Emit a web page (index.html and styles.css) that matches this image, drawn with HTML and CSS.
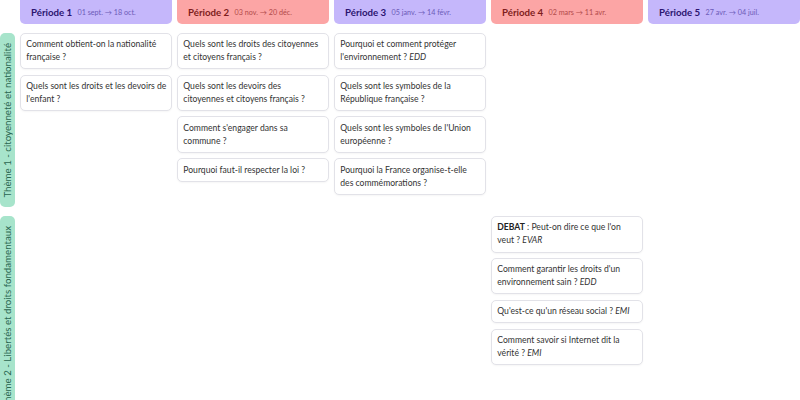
FILE: index.html
```html
<!DOCTYPE html>
<html lang="fr">
<head>
<meta charset="utf-8">
<link rel="stylesheet" href="styles.css">
</head>
<body>
<div class="board">
  <div class="corner"></div>
  <div class="period violet"><span class="p-name">Période 1</span><span class="p-date">01 sept. → 18 oct.</span></div>
  <div class="period red"><span class="p-name">Période 2</span><span class="p-date">03 nov. → 20 déc.</span></div>
  <div class="period violet"><span class="p-name">Période 3</span><span class="p-date">05 janv. → 14 févr.</span></div>
  <div class="period red"><span class="p-name">Période 4</span><span class="p-date">02 mars → 11 avr.</span></div>
  <div class="period violet"><span class="p-name">Période 5</span><span class="p-date">27 avr. → 04 juil.</span></div>

  <div class="theme"><span>Thème 1 - citoyenneté et nationalité</span></div>
  <div class="cell">
    <div class="card">Comment obtient-on la nationalité<br>française ?</div>
    <div class="card">Quels sont les droits et les devoirs de<br>l'enfant ?</div>
  </div>
  <div class="cell">
    <div class="card">Quels sont les droits des citoyennes<br>et citoyens français ?</div>
    <div class="card">Quels sont les devoirs des<br>citoyennes et citoyens français ?</div>
    <div class="card">Comment s'engager dans sa<br>commune ?</div>
    <div class="card">Pourquoi faut-il respecter la loi ?</div>
  </div>
  <div class="cell">
    <div class="card">Pourquoi et comment protéger<br>l'environnement ? <em>EDD</em></div>
    <div class="card">Quels sont les symboles de la<br>République française ?</div>
    <div class="card">Quels sont les symboles de l'Union<br>européenne ?</div>
    <div class="card">Pourquoi la France organise-t-elle<br>des commémorations ?</div>
  </div>
  <div class="cell"></div>
  <div class="cell"></div>

  <div class="theme"><span>Thème 2 - Libertés et droits fondamentaux</span></div>
  <div class="cell"></div>
  <div class="cell"></div>
  <div class="cell"></div>
  <div class="cell">
    <div class="card"><strong>DEBAT</strong> : Peut-on dire ce que l'on<br>veut ? <em>EVAR</em></div>
    <div class="card">Comment garantir les droits d'un<br>environnement sain ? <em>EDD</em></div>
    <div class="card">Qu'est-ce qu'un réseau social ? <em>EMI</em></div>
    <div class="card">Comment savoir si Internet dit la<br>vérité ? <em>EMI</em></div>
  </div>
  <div class="cell"></div>
</div>
</body>
</html>
```

FILE: styles.css
```css
html, body {
  margin: 0;
  padding: 0;
  background: #ffffff;
}

body {
  font-family: Lato, "Noto Sans", sans-serif;
  color: #333333;
  overflow: hidden;
}

.board {
  display: grid;
  grid-template-columns: 15px repeat(5, 152px);
  column-gap: 5px;
  row-gap: 8.7px;
  align-items: start;
}

.period {
  height: 24px;
  box-sizing: border-box;
  display: flex;
  align-items: center;
  gap: 5.3px;
  padding: 0 11px;
  border-radius: 0 0 5px 5px;
}

.p-name {
  font-weight: 700;
  font-size: 9.7px;
}

.p-date {
  font-size: 7.2px;
  padding-top: 1px;
}

.violet {
  background: #c5b7fb;
}
.violet .p-name { color: #2b1470; }
.violet .p-date { color: #6c5bb8; }

.red {
  background: #fca5a5;
}
.red .p-name { color: #7f1d1d; }
.red .p-date { color: #b24a4a; }

.theme {
  align-self: stretch;
  background: #a7e4cb;
  border-radius: 5px;
  display: flex;
  justify-content: center;
  padding: 10px 0;
}

.theme span {
  writing-mode: vertical-rl;
  transform: rotate(180deg);
  font-size: 9.7px;
  line-height: 15px;
  color: #2a6650;
  white-space: nowrap;
}

.cell {
  display: flex;
  flex-direction: column;
  gap: 5.3px;
}

.card {
  border: 0.75px solid #e2e2e8;
  border-radius: 5px;
  padding: 4.3px 3px 4.3px 5.3px;
  font-size: 8.6px;
  line-height: 13px;
  color: #333333;
  background: #ffffff;
  white-space: nowrap;
  box-shadow: 0 1px 2px rgba(0, 0, 0, 0.04);
}

.card strong {
  font-weight: 700;
  color: #222222;
}
```
